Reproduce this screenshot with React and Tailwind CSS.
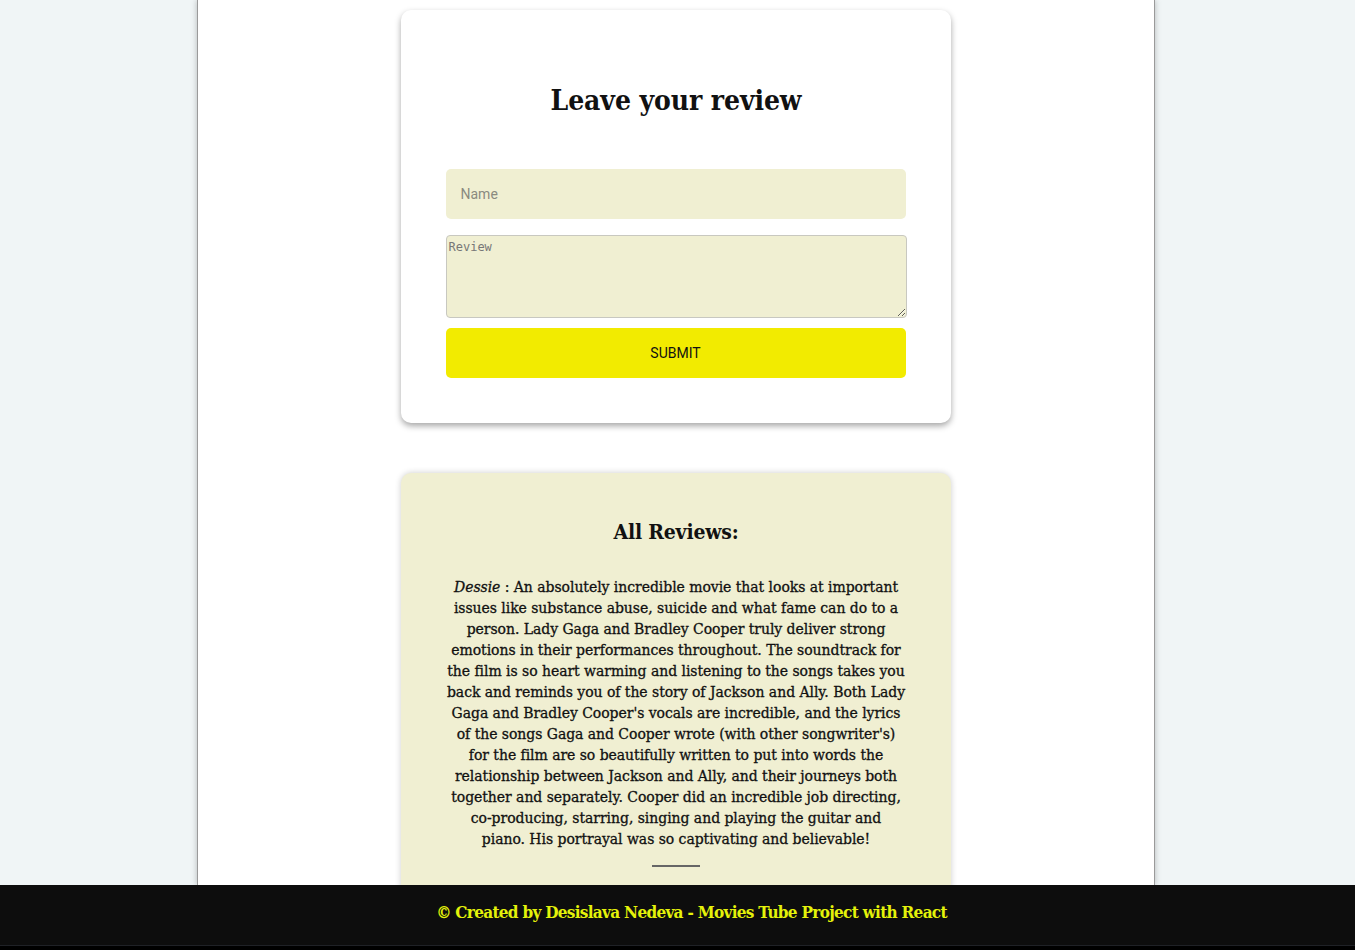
import React from "react";

const lines = [
  "issues like substance abuse, suicide and what fame can do to a",
  "person. Lady Gaga and Bradley Cooper truly deliver strong",
  "emotions in their performances throughout. The soundtrack for",
  "the film is so heart warming and listening to the songs takes you",
  "back and reminds you of the story of Jackson and Ally. Both Lady",
  "Gaga and Bradley Cooper's vocals are incredible, and the lyrics",
  "of the songs Gaga and Cooper wrote (with other songwriter's)",
  "for the film are so beautifully written to put into words the",
  "relationship between Jackson and Ally, and their journeys both",
  "together and separately. Cooper did an incredible job directing,",
  "co-producing, starring, singing and playing the guitar and",
  "piano. His portrayal was so captivating and believable!",
];

const serif = { fontFamily: '"DejaVu Serif", "Liberation Serif", serif' };

export default function App() {
  return (
    <div className="h-[950px] w-full flex flex-col overflow-hidden bg-[#f0f5f6]">
      <div className="flex-1 min-h-0 flex justify-center pr-[3px] overflow-hidden">
        <div className="w-[958px] h-full bg-white border-x border-[#9a9a9a] shadow-[0_0_6px_rgba(0,0,0,0.25)] flex flex-col items-center pt-[10px] overflow-hidden">
          <div className="w-[550px] shrink-0 bg-white rounded-[10px] shadow-[0_3px_6px_rgba(0,0,0,0.35)] flex flex-col items-center pt-[71px] pb-[45px]">
            <h1 className="text-[28px] leading-[40px] font-bold text-[#111] tracking-[-0.1px] font-stretch-condensed" style={serif}>
              Leave your review
            </h1>
            <div className="w-[461px] mt-[48px] flex flex-col">
              <input
                className="w-[460px] h-[50px] rounded-[5px] bg-[#f0efd2] px-[15px] text-[14px] text-[#333] placeholder:text-[#8a8a80] outline-none"
                style={{ fontFamily: "Roboto, sans-serif" }}
                placeholder="Name"
              />
              <textarea
                className="mt-[16px] w-[461px] h-[83px] rounded-[4px] border border-[#c8c8c0] bg-[#f0efd2] px-[2px] pt-[2px] text-[12px] text-[#333] placeholder:text-[#777] outline-none resize-y"
                style={{ fontFamily: '"DejaVu Sans Mono", monospace' }}
                placeholder="Review"
              />
              <button
                className="mt-[10px] w-[460px] h-[50px] rounded-[5px] bg-[#f2eb00] text-[14px] text-[#111]"
                style={{ fontFamily: "Roboto, sans-serif" }}
              >
                SUBMIT
              </button>
            </div>
          </div>

          <div className="mt-[50px] w-[550px] shrink-0 bg-[#f0efd2] rounded-[10px] shadow-[0_0_6px_rgba(0,0,0,0.2)] flex flex-col items-center pt-[44px] pb-[40px]">
            <h2 className="text-[21px] leading-[30px] font-bold text-[#111] tracking-[-0.2px] font-stretch-condensed" style={serif}>
              All Reviews:
            </h2>
            <div
              className="mt-[30px] w-[480px] text-center text-[14px] leading-[21px] text-[#111] tracking-[-0.05px] [-webkit-text-stroke:0.3px_#111]"
              style={serif}
            >
              <div className="whitespace-nowrap">
                <i>Dessie</i> : An absolutely incredible movie that looks at important
              </div>
              {lines.map((l, i) => (
                <div key={i} className="whitespace-nowrap">{l}</div>
              ))}
            </div>
            <div className="mt-[15px] w-[48px] h-[2px] bg-[#666]" />
          </div>
        </div>
      </div>
      <footer className="h-[60px] shrink-0 bg-[#0d0d0d] flex items-center justify-center pl-[28px] pb-[4px]">
        <p className="text-[17px] font-bold text-[#e4f20a] tracking-[-0.7px] font-stretch-condensed" style={serif}>
          © Created by Desislava Nedeva - Movies Tube Project with React
        </p>
      </footer>
      <div className="h-[5px] shrink-0 bg-black border-t border-[#1f2126]" />
    </div>
  );
}
